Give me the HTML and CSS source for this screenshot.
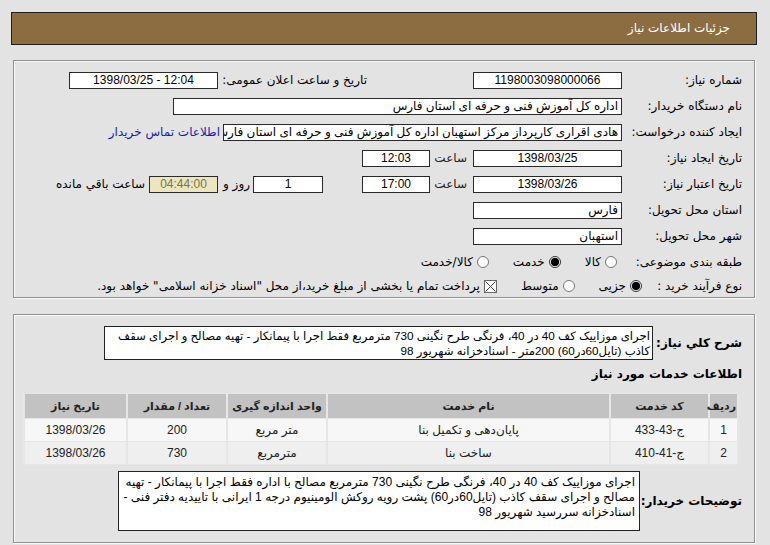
FILE: index.html
```html
<!DOCTYPE html>
<html lang="fa" dir="rtl">
<head>
<meta charset="utf-8">
<title>جزئیات اطلاعات نیاز</title>
<link rel="stylesheet" href="styles.css">
</head>
<body>
<div class="page">
  <div class="titlebar">جزئیات اطلاعات نیاز</div>

  <div class="panel panel-top">
    <div class="row">
      <div class="lbl">شماره نیاز:</div>
      <div class="box w149 center">1198003098000066</div>
      <div class="lbl2">تاریخ و ساعت اعلان عمومی:</div>
      <div class="box w149 center" dir="ltr">1398/03/25 - 12:04</div>
    </div>
    <div class="row">
      <div class="lbl">نام دستگاه خریدار:</div>
      <div class="box w449">اداره کل آموزش فنی و حرفه ای استان فارس</div>
    </div>
    <div class="row">
      <div class="lbl">ایجاد کننده درخواست:</div>
      <div class="box w399">هادی اقراری کارپرداز  مرکز  استهبان اداره کل آموزش فنی و حرفه ای استان فارس</div>
      <a class="link" href="#">اطلاعات تماس خریدار</a>
    </div>
    <div class="row">
      <div class="lbl">تاریخ ایجاد نیاز:</div>
      <div class="box w149 center">1398/03/25</div>
      <div class="sa">ساعت</div>
      <div class="box w68 center">12:03</div>
    </div>
    <div class="row">
      <div class="lbl">تاریخ اعتبار نیاز:</div>
      <div class="box w149 center">1398/03/26</div>
      <div class="sa">ساعت</div>
      <div class="box w68 center">17:00</div>
      <div class="box w70 center day">1</div>
      <div class="roz">روز و</div>
      <div class="box w69 center remain">04:44:00</div>
      <div class="rem-lbl">ساعت باقي مانده</div>
    </div>
    <div class="row">
      <div class="lbl">استان محل تحویل:</div>
      <div class="box w149">فارس</div>
    </div>
    <div class="row">
      <div class="lbl">شهر محل تحویل:</div>
      <div class="box w149">استهبان</div>
    </div>
    <div class="row">
      <div class="lbl">طبقه بندی موضوعی:</div>
      <div class="opts">
        <span class="opt"><span class="radio"></span>کالا</span>
        <span class="opt"><span class="radio on"></span>خدمت</span>
        <span class="opt"><span class="radio"></span>کالا/خدمت</span>
      </div>
    </div>
    <div class="row last">
      <div class="lbl lbl-narrow">نوع فرآیند خرید :</div>
      <div class="opts">
        <span class="opt"><span class="radio on"></span>جزیی</span>
        <span class="opt"><span class="radio"></span>متوسط</span>
        <span class="opt"><span class="check"><svg width="11" height="11" viewBox="0 0 11 11"><path d="M0.5 0.5L10.5 10.5M10.5 0.5L0.5 10.5" stroke="#444" stroke-width="1"/></svg></span>پرداخت تمام یا بخشی از مبلغ خرید،از محل "اسناد خزانه اسلامی" خواهد بود.</span>
      </div>
    </div>
  </div>

  <div class="panel panel-bottom">
    <div class="desc-row">
      <div class="blbl w89">شرح کلي نیاز:</div>
      <div class="tbox desc">اجرای موزاییک کف 40 در 40، فرنگی طرح نگینی 730 مترمربع  فقط اجرا با پیمانکار - تهیه مصالح و اجرای سقف<br>کاذب (تایل60در60) 200متر - اسنادخزانه  شهریور 98</div>
    </div>
    <div class="heading">اطلاعات خدمات مورد نیاز</div>
    <table class="grid">
      <colgroup>
        <col class="c1"><col class="c2"><col class="c3"><col class="c4"><col class="c5"><col class="c6">
      </colgroup>
      <thead>
        <tr><th>ردیف</th><th>کد خدمت</th><th>نام خدمت</th><th>واحد اندازه گیری</th><th>تعداد / مقدار</th><th>تاریخ نیاز</th></tr>
      </thead>
      <tbody>
        <tr class="odd"><td>1</td><td><span dir="ltr">ج-43-433</span></td><td>پایان‌دهی و تکمیل بنا</td><td>متر مربع</td><td>200</td><td>1398/03/26</td></tr>
        <tr class="even"><td>2</td><td><span dir="ltr">ج-41-410</span></td><td>ساخت بنا</td><td>مترمربع</td><td>730</td><td>1398/03/26</td></tr>
      </tbody>
    </table>
    <div class="desc-row buyer-row">
      <div class="blbl w102">توضیحات خریدار:</div>
      <div class="tbox buyer">اجرای موزاییک کف 40 در 40، فرنگی طرح نگینی 730 مترمربع مصالح با اداره فقط اجرا با پیمانکار - تهیه<br>مصالح و اجرای سقف کاذب (تایل60در60) پشت رویه روکش الومینیوم درجه 1 ایرانی با تاییدیه دفتر فنی -<br>اسنادخزانه سررسید شهریور 98</div>
    </div>
  </div>
</div>
</body>
</html>
```

FILE: styles.css
```css
* { box-sizing: border-box; }
html, body { margin: 0; padding: 0; }
body {
  background: #e3e3e3;
  font-family: "DejaVu Sans", sans-serif;
  font-size: 12px;
  color: #000;
  width: 770px;
  height: 545px;
  overflow: hidden;
}
.page { padding: 12px 13px 0 11px; }

.titlebar {
  height: 33px;
  background: #8c6d41;
  border: 1px solid #1e1e1e;
  color: #fff;
  font-size: 12px;
  line-height: 30px;
  padding-right: 26px;
}

.panel {
  margin: 0 2px;
  border: 1px solid #8f8f8f;
  box-shadow: inset 1px 1px 0 #fbfbfb, 1px 1px 0 #fbfbfb;
  padding-right: 12px;
}
.panel-top { margin-top: 15px; height: 238px; padding-top: 6px; }
.panel-bottom { margin-top: 16px; height: 229px; padding-top: 11px; }

.row { display: flex; align-items: center; height: 26px; }
.row.last { height: 22px; }
.lbl { width: 120px; flex: none; white-space: nowrap; }
.lbl-narrow { width: 100px; }
.lbl2 { width: 149px; margin-right: 106px; flex: none; white-space: nowrap; }

.box {
  flex: none;
  height: 17px;
  border: 1px solid #2a2a2a;
  background: #fff;
  line-height: 15px;
  padding: 0 3px;
  white-space: nowrap;
  overflow: hidden;
  font-family: "Liberation Sans", "DejaVu Sans", sans-serif;
  font-size: 12px;
}
.center { text-align: center; }
.w149 { width: 149px; }
.w449 { width: 449px; }
.w399 { width: 399px; }
.w68 { width: 68px; }
.w70 { width: 70px; }
.w69 { width: 69px; }
.day { margin-right: 39px; }
.remain { background: #ebe6bf; color: #77774a; }

.link { color: #1c1ca8; text-decoration: none; margin-right: 3px; white-space: nowrap; }
.sa { width: 43px; padding-right: 6px; flex: none; color: #222; }
.roz { width: 35px; padding-right: 3px; flex: none; }
.rem-lbl { margin-right: 4px; white-space: nowrap; }

.opts { display: flex; align-items: center; padding-right: 5px; }
.lbl-narrow + .opts { padding-right: 0; }
.opt { display: inline-flex; align-items: center; margin-left: 24px; white-space: nowrap; }
.radio {
  width: 12px; height: 12px;
  border: 1px solid #777;
  border-radius: 50%;
  background: #fff;
  margin-left: 4px;
  flex: none;
}
.radio.on { background: radial-gradient(circle, #000 0 3.6px, #444 4px, #fff 4.6px); border-color: #333; }
.check {
  width: 13px; height: 13px;
  border: 1px solid #666;
  background: #fff;
  margin-left: 4px;
  display: inline-flex;
  flex: none;
}
.check svg { display: block; }

.desc-row { display: flex; align-items: center; }
.blbl { flex: none; font-weight: bold; font-size: 12px; white-space: nowrap; }
.w89 { width: 89px; }
.w102 { width: 102px; }
.tbox {
  flex: none;
  border: 1px solid #222;
  background: #fff;
  white-space: nowrap;
  overflow: hidden;
  padding: 1px 3px 0 3px;
  line-height: 15px;
  font-family: "Liberation Sans", "DejaVu Sans", sans-serif;
  font-size: 12px;
}
.desc { width: 549px; height: 34px; padding: 1px 2px 0 1px; font-size: 11.7px; }
.buyer { width: 522px; height: 60px; padding-top: 3px; padding-right: 4px; }
.buyer-row { margin-top: 6px; }

.heading { font-weight: bold; font-size: 12px; margin-top: 6px; height: 16px; line-height: 16px; }

.grid {
  margin-top: 11px;
  margin-right: 3px;
  width: 712px;
  border-collapse: separate;
  border-spacing: 2px 1px;
  background: #e6e6e6;
  table-layout: fixed;
  font-family: "Liberation Sans", "DejaVu Sans", sans-serif;
}
.c1 { width: 27px; } .c2 { width: 97px; } .c3 { width: 281px; }
.c4 { width: 98px; } .c5 { width: 98px; } .c6 { width: 101px; }
.grid th {
  background: #c2c2c2;
  height: 24px;
  font-weight: bold;
  font-size: 11px;
  text-align: center;
  color: #222;
}
.grid th:first-child { text-align: right; padding-right: 1px; }
.grid td { height: 22px; text-align: center; font-size: 12px; color: #222; }
.grid tr.odd td { background: #f7f7f7; }
.grid tr.even td { background: #efefef; }
```
